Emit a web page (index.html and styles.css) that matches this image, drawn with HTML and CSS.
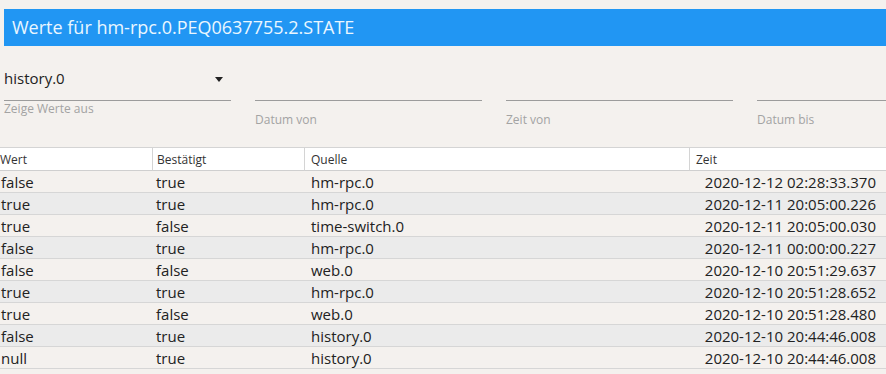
FILE: index.html
```html
<!DOCTYPE html>
<html>
<head>
	<title>Werte</title>
	<link rel="stylesheet" href="styles.css">
</head>
<body>

	<div class="titlebar">Werte für hm-rpc.0.PEQ0637755.2.STATE</div>

	<div class="filters">
		<div class="field">
			<div class="value select">history.0 <span class="arrow"></span></div>
			<div class="label first">Zeige Werte aus</div>
		</div>
		<div class="field">
			<div class="value"></div>
			<div class="label">Datum von</div>
		</div>
		<div class="field">
			<div class="value"></div>
			<div class="label">Zeit von</div>
		</div>
		<div class="field">
			<div class="value"></div>
			<div class="label">Datum bis</div>
		</div>
	</div>

	<table class="values">
		<colgroup>
			<col class="c1"><col class="c2"><col class="c3"><col class="c4">
		</colgroup>
		<thead>
			<tr><th>Wert</th><th>Bestätigt</th><th>Quelle</th><th>Zeit</th></tr>
		</thead>
		<tbody>
			<tr><td>false</td><td>true</td><td>hm-rpc.0</td><td class="ts">2020-12-12 02:28:33.370</td></tr>
			<tr><td>true</td><td>true</td><td>hm-rpc.0</td><td class="ts">2020-12-11 20:05:00.226</td></tr>
			<tr><td>true</td><td>false</td><td>time-switch.0</td><td class="ts">2020-12-11 20:05:00.030</td></tr>
			<tr><td>false</td><td>true</td><td>hm-rpc.0</td><td class="ts">2020-12-11 00:00:00.227</td></tr>
			<tr><td>false</td><td>false</td><td>web.0</td><td class="ts">2020-12-10 20:51:29.637</td></tr>
			<tr><td>true</td><td>true</td><td>hm-rpc.0</td><td class="ts">2020-12-10 20:51:28.652</td></tr>
			<tr><td>true</td><td>false</td><td>web.0</td><td class="ts">2020-12-10 20:51:28.480</td></tr>
			<tr><td>false</td><td>true</td><td>history.0</td><td class="ts">2020-12-10 20:44:46.008</td></tr>
			<tr><td>null</td><td>true</td><td>history.0</td><td class="ts">2020-12-10 20:44:46.008</td></tr>
		</tbody>
	</table>

</body>
</html>
```

FILE: styles.css
```css
body {margin:0;background:#f4f1ee;font-family:"Open Sans","Noto Sans",sans-serif;color:#222;overflow:hidden;}

.titlebar {margin:9px 0 0 4px;height:37px;line-height:36px;background:#2196f3;color:#eaf6ff;font-size:18px;padding-left:8px;}

.filters {display:flex;gap:24px;padding-left:4px;margin-top:17px;height:84px;overflow:hidden;}
.field {width:227px;flex:none;}
.field .value {height:38px;border-bottom:1px solid #9c9c9c;box-sizing:border-box;position:relative;font-size:15px;line-height:30px;}
.field .arrow {position:absolute;left:211px;top:14px;width:0;height:0;border-left:4.5px solid transparent;border-right:4.5px solid transparent;border-top:5px solid #222;}
.field .label {font-size:12px;color:#a3a3a3;margin-top:10px;}
.field .label.first {margin-top:-1px;}

.values {border-collapse:separate;border-spacing:0;table-layout:fixed;width:886px;margin-top:0;}
.values col.c1 {width:152px;}
.values col.c2 {width:152px;}
.values col.c3 {width:385px;}
.values col.c4 {width:197px;}
.values th {background:#fff;font-weight:normal;font-size:12px;color:#333;text-align:left;height:22px;padding:0 0 0 4px;border-top:1px solid #d4d4d4;border-bottom:1px solid #cfcfcf;border-left:1px solid #d4d4d4;}
.values th:first-child {border-left:none;padding-left:0;}
.values th:nth-child(3), .values th:nth-child(4) {padding-left:6px;}
.values td {height:21px;padding:0 0 0 4px;font-size:15px;border-bottom:1px solid #d6d6d6;white-space:nowrap;}
.values td:first-child {padding-left:1px;}
.values td:nth-child(3) {padding-left:7px;}
.values td.ts {text-align:right;padding-right:10px;}
.values tbody tr:nth-child(even) td {background:#ebebeb;}
```
